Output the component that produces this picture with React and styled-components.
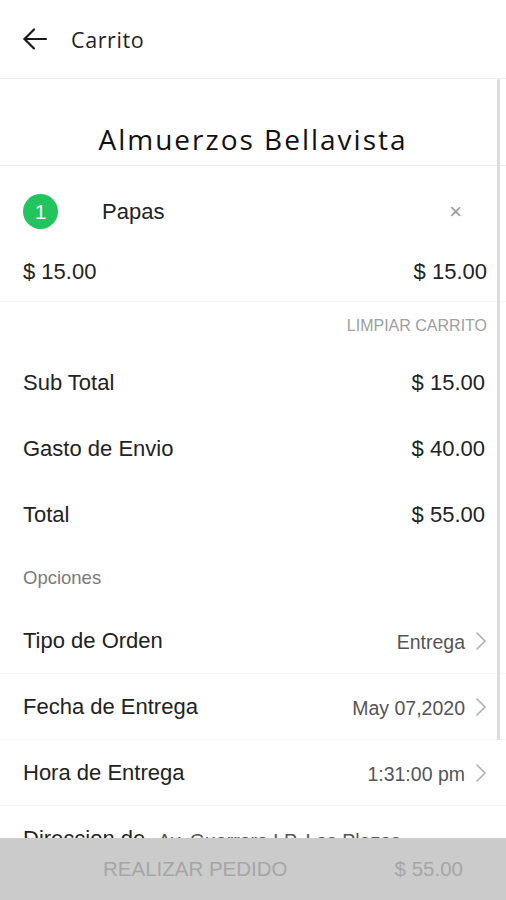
import React from 'react';
import styled, { createGlobalStyle } from 'styled-components';

const GlobalStyle = createGlobalStyle`
  html, body {
    margin: 0;
    padding: 0;
    background: #ffffff;
  }
  * {
    box-sizing: border-box;
  }
`

const Screen = styled.div`
  width: 506px;
  height: 900px;
  display: flex;
  flex-direction: column;
  overflow: hidden;
  font-family: "Liberation Sans", Arial, sans-serif;
  color: #222222;
`

const TopBar = styled.div`
  height: 79px;
  flex-shrink: 0;
  display: flex;
  align-items: center;
  padding-left: 22px;
  border-bottom: 1px solid #ececec;
`

const BackButton = styled.button`
  width: 26px;
  height: 26px;
  padding: 0;
  border: none;
  background: none;
  display: flex;
  align-items: center;
  justify-content: center;
  margin-right: 23px;
  cursor: pointer;
`

const TopTitle = styled.div`
  font-family: "Open Sans", sans-serif;
  font-size: 21.5px;
  letter-spacing: 0.6px;
  color: #1f1f1f;
  margin-top: 1px;
`

const Scroller = styled.div`
  flex: 1;
  position: relative;
  overflow: hidden;
`

const ScrollThumb = styled.div`
  position: absolute;
  top: 0;
  right: 6px;
  width: 3px;
  height: 661px;
  background: #dcdcdc;
  border-radius: 2px;
`

const StoreName = styled.div`
  padding-top: 42px;
  height: 87px;
  border-bottom: 1px solid #ececec;
  text-align: center;
  font-family: "Open Sans", sans-serif;
  font-size: 28px;
  line-height: 36px;
  letter-spacing: 2px;
  color: #111111;
`

const ItemRow = styled.div`
  display: flex;
  align-items: center;
  padding: 28px 44px 0 23px;
  height: 63px;
  font-size: 22px;
`

const Qty = styled.div`
  width: 35px;
  height: 35px;
  border-radius: 50%;
  background: #21c45d;
  color: #ffffff;
  font-size: 21px;
  display: flex;
  align-items: center;
  justify-content: center;
  margin-right: 44px;
`

const ItemName = styled.div`
  flex: 1;
`

const Remove = styled.div`
  color: #9a9a9a;
  font-size: 22px;
  line-height: 1;
`

const PriceRow = styled.div`
  display: flex;
  justify-content: space-between;
  align-items: center;
  padding: 0 19px 16px 23px;
  margin-top: 30px;
  height: 43px;
  font-size: 22px;
  line-height: 26px;
  border-bottom: 1px solid #f6f6f6;
`

const ClearLink = styled.div`
  text-align: right;
  padding-right: 19px;
  margin-top: 14px;
  height: 34px;
  font-size: 16px;
  line-height: 20px;
  color: #a0a0a0;
`

const SumRow = styled.div`
  display: flex;
  justify-content: space-between;
  align-items: center;
  height: 66px;
  padding: 0 21px 0 23px;
  font-size: 22px;
`

const SectionLabel = styled.div`
  height: 60px;
  display: flex;
  align-items: center;
  padding: 0 23px;
  font-size: 18.5px;
  color: #7a7a7a;
`

const OptionRow = styled.div`
  display: flex;
  align-items: center;
  height: ${p => p.$tall ? '110px' : '66px'};
  padding: 0 19px 0 23px;
  border-bottom: 1px solid #f6f6f6;
  font-size: 22px;
`

const OptionLabel = styled.div`
  flex: 1;
`

const AddressLabel = styled.div`
  width: 130px;
  align-self: flex-start;
  padding-top: 20px;
  line-height: 26px;
`

const OptionValue = styled.div`
  font-size: 19.5px;
  color: #555555;
  margin-top: 3px;
`

const AddressValue = styled.div`
  flex: 1;
  align-self: flex-start;
  padding: 23px 0 0 5px;
  font-size: 19.5px;
  line-height: 24px;
  color: #555555;
`

const Chevron = styled.svg`
  margin-left: 10px;
  flex-shrink: 0;
`

const Footer = styled.div`
  height: 62px;
  flex-shrink: 0;
  background: #cbcbcb;
  display: flex;
  align-items: center;
  padding: 0 43px 0 103px;
  font-size: 20.5px;
  color: #a6a6a6;
`

const FooterLabel = styled.div`
  flex: 1;
`

function ArrowBack() {
  return (
    <svg width="26" height="26" viewBox="0 0 26 26" fill="none" stroke="#1a1a1a" strokeWidth="2.2" strokeLinecap="round" strokeLinejoin="round">
      <path d="M24 13H2.5" />
      <path d="M12 3.5L2.5 13L12 22.5" />
    </svg>
  )
}

function ChevronRight() {
  return (
    <Chevron width="12" height="20" viewBox="0 0 12 20" fill="none" stroke="#b0b0b0" strokeWidth="1.6" strokeLinecap="round">
      <path d="M2 2l8 8-8 8" />
    </Chevron>
  )
}

const totals = [
  { label: 'Sub Total', value: '$ 15.00' },
  { label: 'Gasto de Envio', value: '$ 40.00' },
  { label: 'Total', value: '$ 55.00' },
]

const options = [
  { label: 'Tipo de Orden', value: 'Entrega' },
  { label: 'Fecha de Entrega', value: 'May 07,2020' },
  { label: 'Hora de Entrega', value: '1:31:00 pm' },
]

export default function App() {
  return (
    <Screen>
      <GlobalStyle />
      <TopBar>
        <BackButton><ArrowBack /></BackButton>
        <TopTitle>Carrito</TopTitle>
      </TopBar>
      <Scroller>
        <ScrollThumb />
        <StoreName>Almuerzos Bellavista</StoreName>
        <ItemRow>
          <Qty>1</Qty>
          <ItemName>Papas</ItemName>
          <Remove>×</Remove>
        </ItemRow>
        <PriceRow>
          <span>$ 15.00</span>
          <span>$ 15.00</span>
        </PriceRow>
        <ClearLink>LIMPIAR CARRITO</ClearLink>
        {totals.map(t => (
          <SumRow key={t.label}>
            <span>{t.label}</span>
            <span>{t.value}</span>
          </SumRow>
        ))}
        <SectionLabel>Opciones</SectionLabel>
        {options.map(o => (
          <OptionRow key={o.label}>
            <OptionLabel>{o.label}</OptionLabel>
            <OptionValue>{o.value}</OptionValue>
            <ChevronRight />
          </OptionRow>
        ))}
        <OptionRow $tall>
          <AddressLabel>Direccion de Entrega</AddressLabel>
          <AddressValue>Av. Guerrero LP, Las Plazas, Tegucigalpa</AddressValue>
          <ChevronRight />
        </OptionRow>
      </Scroller>
      <Footer>
        <FooterLabel>REALIZAR PEDIDO</FooterLabel>
        <span>$ 55.00</span>
      </Footer>
    </Screen>
  );
}
